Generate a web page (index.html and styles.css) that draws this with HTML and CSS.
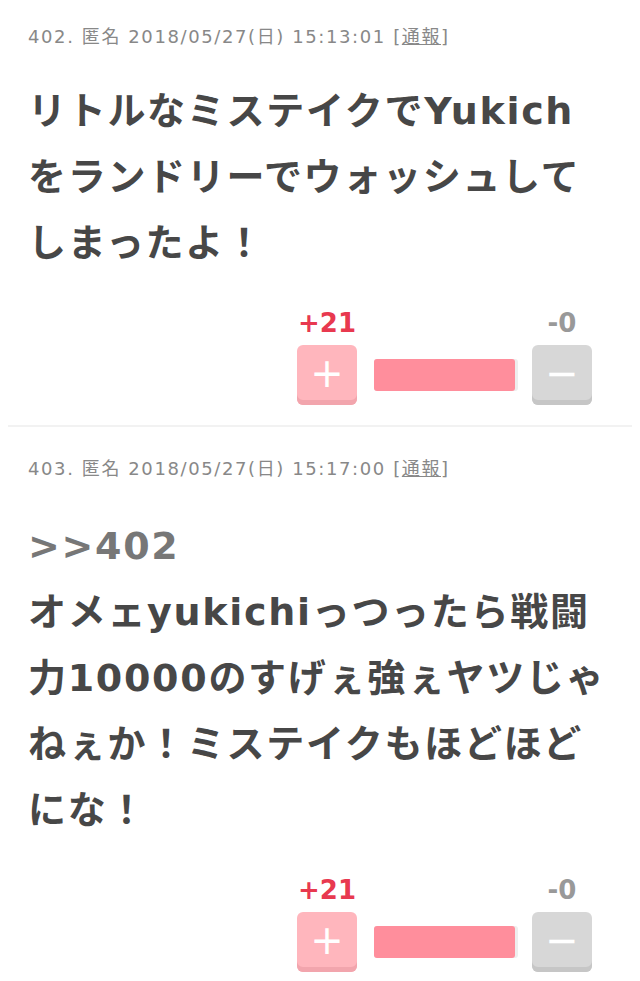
FILE: index.html
```html
<!DOCTYPE html>
<html lang="ja">

<head>
    <meta charset="UTF-8">
    <meta name="viewport" content="width=device-width, initial-scale=1.0">
    <title>402-403</title>
    <link rel="stylesheet" href="styles.css">
</head>

<body>

<div class="thread">
    <div class="post">
        <div class="postHead">402. 匿名 2018/05/27(日) 15:13:01 <span class="report">[<a href="#">通報</a>]</span></div>
        <div class="postBody">
            リトルなミステイクでYukich<br/>
            をランドリーでウォッシュして<br/>
            しまったよ！
        </div>
        <div class="vote">
            <span class="count plus">+21</span>
            <span></span>
            <span class="count minus">-0</span>
            <button type="button" class="btn btnPlus">+</button>
            <div class="bar"><div class="barFill" style="width: 100%"></div></div>
            <button type="button" class="btn btnMinus">−</button>
        </div>
    </div>
    <div class="post">
        <div class="postHead">403. 匿名 2018/05/27(日) 15:17:00 <span class="report">[<a href="#">通報</a>]</span></div>
        <div class="postBody">
            <span class="anchor">&gt;&gt;402</span><br/>
            オメェyukichiっつったら戦闘<br/>
            力10000のすげぇ強ぇヤツじゃ<br/>
            ねぇか！ミステイクもほどほど<br/>
            にな！
        </div>
        <div class="vote">
            <span class="count plus">+21</span>
            <span></span>
            <span class="count minus">-0</span>
            <button type="button" class="btn btnPlus">+</button>
            <div class="bar"><div class="barFill" style="width: 100%"></div></div>
            <button type="button" class="btn btnMinus">−</button>
        </div>
    </div>
</div>

</body>

</html>
```

FILE: styles.css
```css
html, body {
    background: #fff;
}

body {
    margin: 0 8px;
    font-family: "DejaVu Sans", "Noto Sans CJK JP", sans-serif;
}

.post {
    padding: 27px 0 20px 20px;
    border-bottom: 2px solid #f2f2f2;
}

.post:first-child {
    padding-top: 22px;
}

.postHead {
    font-size: 18px;
    line-height: 30px;
    letter-spacing: 1.6px;
    color: #888;
}

.report a {
    color: #888;
}

.postBody {
    margin-top: 26px;
    font-size: 38px;
    line-height: 66px;
    letter-spacing: 1.7px;
    font-weight: bold;
    color: #474747;
    white-space: nowrap;
}

.anchor {
    color: #777;
}

.post + .post .postBody {
    margin-top: 29px;
}

.vote {
    display: grid;
    grid-template-columns: 60px 141px 60px;
    column-gap: 17px;
    row-gap: 7px;
    justify-content: end;
    align-items: center;
    margin: 32px 40px 0 0;
}

.count {
    font-size: 26px;
    line-height: 30px;
    font-weight: bold;
    text-align: center;
}

.plus {
    color: #e8394f;
}

.minus {
    color: #999;
}

.btn {
    width: 60px;
    height: 60px;
    border: none;
    border-radius: 6px;
    padding: 0 0 4px;
    color: #fff;
    font-family: "DejaVu Sans", sans-serif;
    font-size: 40px;
    line-height: 56px;
}

.btnPlus {
    background: #ffb6bd;
    box-shadow: inset 0 -5px 0 #f2a5ad;
}

.btnMinus {
    background: #d7d7d7;
    box-shadow: inset 0 -5px 0 #c6c6c6;
}

.bar {
    height: 32px;
    background: #eee;
    border-radius: 3px;
    overflow: hidden;
    box-shadow: 3px 0 0 #eee;
}

.barFill {
    height: 100%;
    background: #ff8e9c;
}
```
